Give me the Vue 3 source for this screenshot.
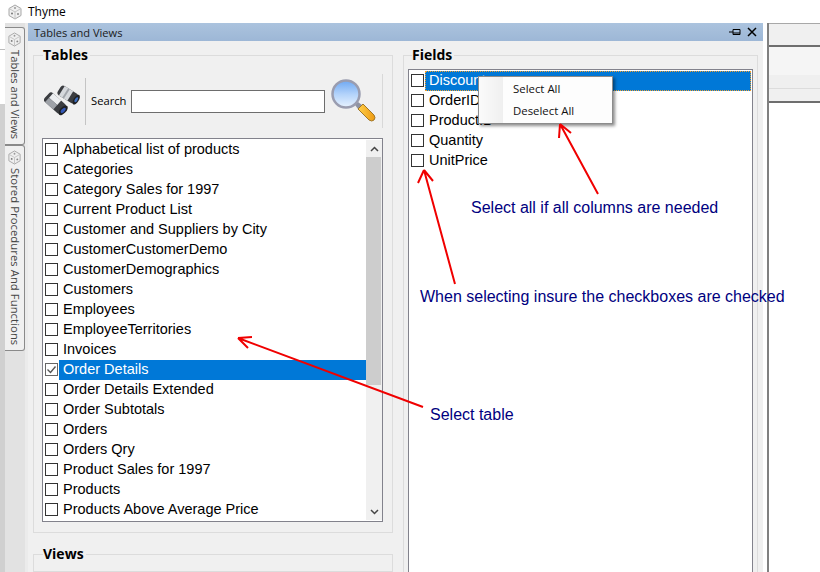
<script setup>
const tables = [
  'Alphabetical list of products', 'Categories', 'Category Sales for 1997', 'Current Product List',
  'Customer and Suppliers by City', 'CustomerCustomerDemo', 'CustomerDemographics', 'Customers',
  'Employees', 'EmployeeTerritories', 'Invoices', 'Order Details', 'Order Details Extended',
  'Order Subtotals', 'Orders', 'Orders Qry', 'Product Sales for 1997', 'Products',
  'Products Above Average Price'
]
const fields = ['Discount', 'OrderID', 'ProductID', 'Quantity', 'UnitPrice']
const tabs = [
  { label: 'Tables and Views', cls: 'tab-a' },
  { label: 'Stored Procedures And Functions', cls: 'tab-b' }
]
</script>

<template>
  <div class="screen">
    <header class="title">
      <svg class="cube" width="16" height="16" viewBox="0 0 16 16"><path d="M8 1l6 3.500v7L8 15l-6-3.500v-7z" fill="#efefef" stroke="#a8a8a8"/><path d="M2 4.500L8 8l6-3.500M8 8v7" fill="none" stroke="#c4c4c4"/><circle cx="5" cy="9.500" r="1" fill="#777"/><circle cx="11" cy="10" r="1" fill="#888"/><circle cx="8" cy="4" r="1" fill="#999"/></svg>
      <span>Thyme</span>
    </header>
    <div class="body">
      <div class="edge">
        <div class="edge-top"></div>
        <div class="edge-mid"></div>
        <div class="edge-low"></div>
      </div>
      <nav class="rail">
        <div v-for="t in tabs" :key="t.label" class="tab" :class="t.cls">
          <svg class="cube" width="15" height="15" viewBox="0 0 16 16"><path d="M8 1l6 3.500v7L8 15l-6-3.500v-7z" fill="#efefef" stroke="#a8a8a8"/><path d="M2 4.500L8 8l6-3.500M8 8v7" fill="none" stroke="#c4c4c4"/><circle cx="5" cy="9.500" r="1" fill="#777"/><circle cx="11" cy="10" r="1" fill="#888"/><circle cx="8" cy="4" r="1" fill="#999"/></svg>
          <span class="tab-text">{{ t.label }}</span>
        </div>
      </nav>
      <section class="panel">
        <div class="panel-head">
          <span>Tables and Views</span>
          <span class="head-icons">
            <svg width="12" height="10" viewBox="0 0 12 10"><path d="M0 5h4M4 2.500h7v5H4zM4 6h7" fill="none" stroke="#000"/></svg>
            <svg width="10" height="10" viewBox="0 0 10 10"><path d="M1 1l8 8M9 1l-8 8" fill="none" stroke="#000" stroke-width="1.500"/></svg>
          </span>
        </div>
        <div class="panel-body">
          <div class="col-left">
            <div class="group tables-group">
              <div class="legend">Tables</div>
              <div class="search-bar">
                <svg class="binoculars" width="40" height="32" viewBox="0 0 40 32">
                  <g transform="translate(24,9) rotate(32)">
                    <rect x="-10" y="-5" width="20" height="11" rx="3" fill="#3a3c40"/>
                    <rect x="-7" y="-5" width="10" height="11" fill="#d6d9dd"/>
                    <rect x="-3" y="-5" width="2" height="11" fill="#a2a6ac"/>
                    <ellipse cx="10" cy="0.500" rx="2.600" ry="5.500" fill="#1f2023"/>
                    <ellipse cx="10" cy="0.500" rx="1.300" ry="2.800" fill="#3d6fc0"/>
                  </g>
                  <g transform="translate(11,18) rotate(42)">
                    <rect x="-11" y="-6" width="22" height="12" rx="3" fill="#3a3c40"/>
                    <rect x="-8" y="-6" width="11" height="6" fill="#eceef0"/>
                    <rect x="-8" y="0" width="11" height="6" fill="#9ea2a8"/>
                    <ellipse cx="11" cy="0" rx="3" ry="6" fill="#1f2023"/>
                    <ellipse cx="11" cy="0" rx="1.600" ry="3.200" fill="#3358b8"/>
                  </g>
                </svg>
                <span class="sep"></span>
                <label class="search-label">Search</label>
                <input class="search-input" type="text" />
                <svg class="magnifier" width="46" height="46" viewBox="0 0 46 46">
                  <defs>
                    <linearGradient id="lens" x1="0" y1="0" x2="0" y2="1">
                      <stop offset="0" stop-color="#6ea8f2"/>
                      <stop offset="0.5" stop-color="#b2d2fa"/>
                      <stop offset="1" stop-color="#e8f3ff"/>
                    </linearGradient>
                    <linearGradient id="grip" x1="0" y1="0" x2="1" y2="0">
                      <stop offset="0" stop-color="#ffd04a"/>
                      <stop offset="1" stop-color="#ee9a12"/>
                    </linearGradient>
                  </defs>
                  <path d="M24 27l3-3 4 3-4 4z" fill="#8f93a3"/>
                  <path d="M27 31l5-5 11 11q2 3 0 5t-5 0z" fill="url(#grip)" stroke="#a0772a"/>
                  <circle cx="15" cy="16" r="13.500" fill="url(#lens)" stroke="#9a9db0" stroke-width="2.500"/>
                </svg>
              </div>
              <div class="listbox tables-list">
                <div class="items">
                  <div v-for="t in tables" :key="t" class="row">
                    <span class="check" :class="{ checked: t === 'Order Details' }">
                      <svg v-if="t === 'Order Details'" width="11" height="11" viewBox="0 0 11 11"><path d="M1.500 5.500l3 3 5-6" fill="none" stroke="#555" stroke-width="1.400"/></svg>
                    </span>
                    <span class="label" :class="{ selected: t === 'Order Details' }">{{ t }}</span>
                  </div>
                </div>
                <div class="scrollbar">
                  <svg width="9" height="6" viewBox="0 0 9 6"><path d="M1 5l3.500-3.500L8 5" fill="none" stroke="#444" stroke-width="1.500"/></svg>
                  <div class="thumb"></div>
                  <div class="spacer"></div>
                  <svg width="9" height="6" viewBox="0 0 9 6"><path d="M1 1l3.500 3.500L8 1" fill="none" stroke="#444" stroke-width="1.500"/></svg>
                </div>
              </div>
            </div>
            <div class="group views-group">
              <div class="legend">Views</div>
            </div>
          </div>
          <div class="col-right">
            <div class="group fields-group">
              <div class="legend legend-fields">Fields</div>
              <div class="listbox fields-list">
                <div v-for="(f, i) in fields" :key="f" class="row">
                  <span class="check"></span>
                  <span class="label" :class="{ selected: i === 0, focused: i === 0 }">{{ f }}</span>
                </div>
              </div>
            </div>
          </div>
        </div>
      </section>
      <aside class="doc">
        <div class="doc-a"></div>
        <div class="doc-b"></div>
        <div class="doc-c"></div>
        <div class="doc-d"></div>
        <div class="doc-e"></div>
      </aside>
    </div>

    <div class="menu">
      <div class="menu-item">Select All</div>
      <div class="menu-item">Deselect All</div>
    </div>

    <svg class="arrows" width="820" height="572" viewBox="0 0 820 572">
      <g fill="none" stroke="#f00000" stroke-width="2">
        <path d="M598 194L560 124M560 124l-1 14M560 124l11 9"/>
        <path d="M455 284L424 170M424 170l-6 13M424 170l9 11"/>
        <path d="M423 407L238 338M238 338l10 10M238 338l14-1"/>
      </g>
    </svg>
    <div class="note note-a">Select all if all columns are needed</div>
    <div class="note note-b">When selecting insure the checkboxes are checked</div>
    <div class="note note-c">Select table</div>
  </div>
</template>

<style>
html, body { margin: 0; padding: 0; background: #fff; }
</style>

<style scoped>
.screen { position: relative; width: 820px; height: 572px; overflow: hidden; background: #fff; font-family: "Open Sans", "Noto Sans", sans-serif; color: #000; display: flex; flex-direction: column; }
.title { height: 23px; flex: none; display: flex; align-items: center; gap: 5px; padding-left: 7px; font-size: 12px; }
.body { flex: 1; display: flex; min-height: 0; }
.edge { width: 5px; flex: none; display: flex; flex-direction: column; }
.edge-top { height: 26px; border-bottom: 1px solid #bdbdbd; }
.edge-mid { height: 54px; }
.edge-low { flex: 1; background: #d0d0d0; }
.rail { width: 23px; flex: none; display: flex; flex-direction: column; padding-top: 4px; box-sizing: border-box; background: linear-gradient(90deg, #e2e2e2 20px, #ebebeb 20px); }
.tab { width: 20px; box-sizing: border-box; border: 1px solid #8a8a8a; border-left: 0; border-radius: 0 3px 3px 0; background: #f0f0f0; display: flex; flex-direction: column; align-items: center; padding-top: 4px; gap: 3px; }
.tab-a { height: 118px; }
.tab-b { height: 206px; }
.tab-text { writing-mode: vertical-rl; font-size: 11.200px; color: #444; line-height: 18px; white-space: nowrap; }
.tab-b .tab-text { letter-spacing: 0.1px; }
.panel { width: 735px; flex: none; background: #f0f0f0; display: flex; flex-direction: column; }
.panel-head { height: 18px; flex: none; background: linear-gradient(#abc3de, #9db7d6); font-size: 11.100px; display: flex; align-items: center; justify-content: space-between; padding: 0 6px; color: #1a1a1a; }
.head-icons { display: flex; align-items: center; gap: 6px; }
.panel-body { flex: 1; display: flex; min-height: 0; padding: 14px 5px 0 5px; gap: 10px; }
.col-left { width: 360px; flex: none; display: flex; flex-direction: column; gap: 21px; }
.col-right { flex: 1; display: flex; flex-direction: column; }
.group { position: relative; border: 1px solid #dcdcdc; box-sizing: border-box; }
.legend { position: absolute; top: -10px; left: 9px; padding: 0 2px 0 0; background: #f0f0f0; font: bold 14px/17px "Open Sans", sans-serif; }
.legend-fields { left: 8px; padding-left: 0; }
.tables-group { height: 478px; flex: none; padding: 18px 9px 0 8px; }
.views-group { flex: 1; }
.fields-group { flex: 1; padding: 13px 4px 0 4px; border-bottom: 0; }
.search-bar { height: 54px; margin-bottom: 10px; display: flex; align-items: center; box-sizing: border-box; border-right: 1px solid #d8d8d8; }
.binoculars { margin: 0 1px 0 2px; flex: none; }
.sep { width: 1px; height: 47px; background: #c4c4c4; margin-right: 5px; flex: none; }
.search-label { font-size: 11.200px; width: 35px; margin: -2px 5px 0 0; flex: none; white-space: nowrap; }
.search-input { width: 194px; height: 23px; box-sizing: border-box; border: 1px solid #6d6d6d; background: #fff; padding: 0; outline: 0; flex: none; }
.magnifier { margin-left: 6px; flex: none; }
.listbox { background: #fff; border: 1px solid #82828c; box-sizing: border-box; font: 14.500px/18px "Liberation Sans", Arial, sans-serif; }
.tables-list { height: 384px; display: flex; padding: 1px 0 1px 1px; }
.items { flex: 1; min-width: 0; padding-left: 1px; }
.scrollbar { width: 16px; flex: none; background: #f0f0f0; display: flex; flex-direction: column; align-items: center; padding: 6px 0 5px; box-sizing: border-box; }
.thumb { width: 15px; height: 228px; background: #cdcdcd; margin-top: 5px; align-self: flex-start; }
.spacer { flex: 1; }
.fields-list { height: 520px; padding: 1px 1px 0 2px; }
.row { display: flex; align-items: flex-start; height: 20px; }
.check { width: 13px; height: 13px; box-sizing: border-box; border: 1px solid #333; background: #fff; flex: none; margin: 3px 1px 0 0; display: block; }
.check.checked { border-color: #666; }
.check svg { display: block; }
.label { flex: 1; padding-left: 4px; height: 20px; white-space: nowrap; overflow: hidden; box-sizing: border-box; }
.label.selected { background: #0078d7; color: #fff; }
.label.focused { outline: 1px dotted #f0a030; outline-offset: -1px; }
.doc { flex: 1; border-left: 2px solid #808080; margin-left: 4px; display: flex; flex-direction: column; }
.doc > div { box-sizing: border-box; flex: none; }
.doc-a { height: 24px; background: #f0f0f0; border-top: 1px solid #a8a8a8; border-bottom: 2px solid #6e6e6e; }
.doc-b { height: 28px; background: #f5f5f5; }
.doc-c { height: 14px; background: #efefef; border-bottom: 1px solid #dcdcdc; }
.doc-d { height: 14px; background: #f0f0f0; border-bottom: 2px solid #6e6e6e; }
.doc > .doc-e { flex: 1; background: #fff; }
.menu { position: absolute; left: 478px; top: 76px; width: 135px; height: 48px; box-sizing: border-box; background: linear-gradient(90deg, #fbfbfb, #efefef 24px, #fdfdfd 24px); border: 1px solid #8c8c8c; box-shadow: 2px 2px 3px rgba(0,0,0,.45); padding-top: 1px; font-size: 11.400px; }
.menu-item { height: 22px; line-height: 22px; padding-left: 34px; color: #111; }
.arrows { position: absolute; left: 0; top: 0; pointer-events: none; }
.note { position: absolute; font: 16px/18px "Liberation Sans", Arial, sans-serif; color: #000080; white-space: nowrap; }
.note-a { left: 471px; top: 199px; }
.note-b { left: 420px; top: 288px; }
.note-c { left: 430px; top: 406px; }
</style>
